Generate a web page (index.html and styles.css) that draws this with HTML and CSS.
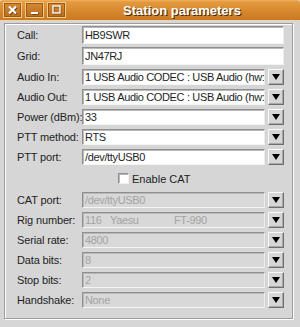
FILE: index.html
```html
<!DOCTYPE html>
<html>
<head>
<meta charset="utf-8">
<link rel="stylesheet" href="styles.css">
</head>
<body>
<div class="win">
  <div class="titlebar">
    <div class="tb-btns">
      <span class="tbtn"><svg width="11" height="10" viewBox="0 0 11 10"><path d="M2 1.5 L9 8.5 M9 1.5 L2 8.5" stroke="#5a3208" stroke-width="2.4" transform="translate(0.6 0.6)"/><path d="M2 1.5 L9 8.5 M9 1.5 L2 8.5" stroke="#fff" stroke-width="2.2"/></svg></span>
      <span class="tbtn"><svg width="11" height="10" viewBox="0 0 11 10"><rect x="2.6" y="7.6" width="7" height="2" fill="#5a3208"/><rect x="2" y="7" width="7" height="2" fill="#fff"/></svg></span>
      <span class="tbtn"><svg width="11" height="10" viewBox="0 0 11 10"><rect x="2.6" y="1.6" width="7" height="7" fill="none" stroke="#5a3208" stroke-width="1.4"/><rect x="2" y="1" width="7" height="7" fill="none" stroke="#fff" stroke-width="1.4"/></svg></span>
    </div>
    <div class="title">Station parameters</div>
  </div>
  <div class="body">
    <div class="frame">
      <div class="row tall first"><span class="lbl">Call:</span><div class="field">HB9SWR</div></div>
      <div class="row tall gap3"><span class="lbl">Grid:</span><div class="field">JN47RJ</div></div>
      <div class="row"><span class="lbl">Audio In:</span><div class="combo"><div class="field">1 USB Audio CODEC : USB Audio (hw:</div><span class="arrow"></span></div></div>
      <div class="row"><span class="lbl">Audio Out:</span><div class="combo"><div class="field">1 USB Audio CODEC : USB Audio (hw:</div><span class="arrow"></span></div></div>
      <div class="row"><span class="lbl">Power (dBm):</span><div class="combo"><div class="field">33</div><span class="arrow"></span></div></div>
      <div class="row"><span class="lbl">PTT method:</span><div class="combo"><div class="field">RTS</div><span class="arrow"></span></div></div>
      <div class="row"><span class="lbl">PTT port:</span><div class="combo"><div class="field">/dev/ttyUSB0</div><span class="arrow"></span></div></div>
      <div class="row check-row"><span class="cbox"></span><span class="ctext">Enable CAT</span></div>
      <div class="row"><span class="lbl">CAT port:</span><div class="combo"><div class="field dis">/dev/ttyUSB0</div><span class="arrow"></span></div></div>
      <div class="row"><span class="lbl">Rig number:</span><div class="combo"><div class="field dis"><span class="c1">116</span><span class="c2">Yaesu</span><span>FT-990</span></div><span class="arrow"></span></div></div>
      <div class="row"><span class="lbl">Serial rate:</span><div class="combo"><div class="field dis">4800</div><span class="arrow"></span></div></div>
      <div class="row"><span class="lbl">Data bits:</span><div class="combo"><div class="field dis">8</div><span class="arrow"></span></div></div>
      <div class="row"><span class="lbl">Stop bits:</span><div class="combo"><div class="field dis">2</div><span class="arrow"></span></div></div>
      <div class="row"><span class="lbl">Handshake:</span><div class="combo"><div class="field dis">None</div><span class="arrow"></span></div></div>
    </div>
  </div>
</div>
</body>
</html>
```

FILE: styles.css
```css
html, body {
  margin: 0;
  padding: 0;
}
body {
  width: 300px;
  height: 327px;
  overflow: hidden;
  background: #d6d6d6;
  font-family: "Liberation Sans", Arial, sans-serif;
  font-size: 11px;
  color: #1e1e1e;
}
.win {
  width: 300px;
  height: 327px;
  display: flex;
  flex-direction: column;
}
.titlebar {
  height: 20px;
  flex: none;
  display: flex;
  align-items: center;
  background: linear-gradient(#f2b25e 0, #e39a3f 2px, #d98a2e 10px, #c97a22 20px);
  border-bottom: 2px solid #e2d6c2;
  border-radius: 3px 3px 0 0;
}
.tb-btns {
  display: flex;
  gap: 3px;
  padding-left: 3px;
}
.tbtn {
  width: 17px;
  height: 14px;
  border: 1px solid #f4c888;
  box-shadow: inset 0 0 0 1px #9a5a14;
  background: linear-gradient(#d68a33, #b96c1c);
  display: flex;
  align-items: center;
  justify-content: center;
}
.title {
  flex: 1;
  text-align: center;
  color: #fff;
  font-weight: bold;
  font-size: 13px;
  text-shadow: 1px 1px 0 #4a2a08;
  padding-right: 2px;
}
.body {
  flex: 1;
  padding: 1px 0 0 4px;
}
.frame {
  width: 289px;
  box-sizing: border-box;
  border: 1px solid #9c9c9c;
  box-shadow: inset 1px 1px 0 #fff, 1px 1px 0 #fff;
  padding: 2px 8px 10px 12px;
  display: flex;
  flex-direction: column;
}
.row {
  display: flex;
  align-items: center;
  height: 16px;
  margin-top: 4px;
  min-width: 0;
}
.row.tall { height: 18px; }
.row.first { margin-top: 0; }
.row.gap3 { margin-top: 3px; }
.lbl {
  width: 65px;
  flex: none;
  white-space: nowrap;
  letter-spacing: -0.15px;
}
.field {
  flex: 1;
  min-width: 0;
  height: 100%;
  box-sizing: border-box;
  background: #fff;
  border: 1px solid;
  border-color: #8e8e8e #ececec #f4f4f4 #8e8e8e;
  box-shadow: inset 1px 1px 0 #b8b8b8;
  padding-left: 2px;
  display: flex;
  align-items: center;
  white-space: nowrap;
  overflow: hidden;
  letter-spacing: -0.35px;
}
.field.dis {
  background: #d8d8d8;
  color: #a4a4a4;
}
.combo {
  flex: 1;
  min-width: 0;
  height: 100%;
  display: flex;
  gap: 3px;
}
.arrow {
  width: 16px;
  height: 100%;
  box-sizing: border-box;
  flex: none;
  background: #d6d6d6;
  border: 1px solid;
  border-color: #fafafa #6e6e6e #6e6e6e #fafafa;
  box-shadow: inset -1px -1px 0 #a8a8a8;
  position: relative;
}
.arrow::after {
  content: "";
  position: absolute;
  left: 3px;
  top: 4px;
  border-left: 4px solid transparent;
  border-right: 4px solid transparent;
  border-top: 6px solid #000;
}
.c1 { width: 25px; flex: none; }
.c2 { width: 64px; flex: none; }
.check-row {
  height: 19px;
  padding-left: 101px;
}
.cbox {
  width: 11px;
  height: 11px;
  box-sizing: border-box;
  background: #fff;
  border: 1px solid;
  border-color: #8e8e8e #f0f0f0 #f0f0f0 #8e8e8e;
  box-shadow: inset 1px 1px 0 #b8b8b8;
  margin-right: 3px;
}
```
